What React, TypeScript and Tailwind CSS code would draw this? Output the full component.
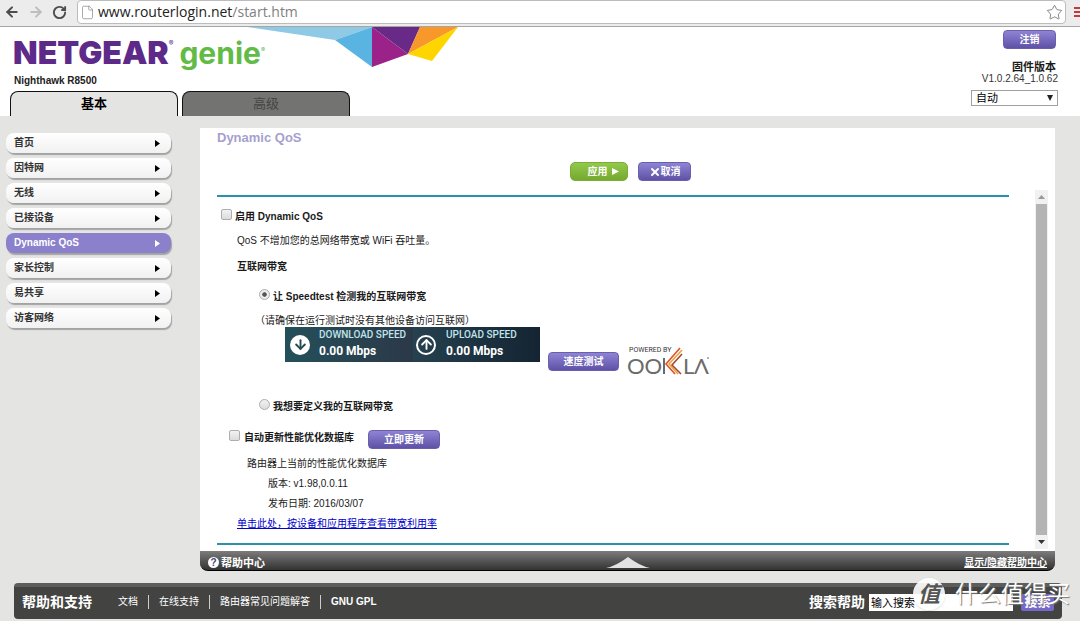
import type { ReactNode } from 'react'
import { ArrowLeft, ArrowRight, ArrowDown, ArrowUp, RotateCw, Star, File, X } from 'lucide-react'

const menuItems = ['首页', '因特网', '无线', '已接设备', 'Dynamic QoS', '家长控制', '易共享', '访客网络']
const helpLinks = ['文档', '在线支持', '路由器常见问题解答', 'GNU GPL']

function PurpleButton({ children, className = '' }: { children: ReactNode; className?: string }) {
  return (
    <button
      className={`flex h-[19px] items-center justify-center rounded border border-[#6a5fae] bg-linear-to-b from-[#8f84d4] to-[#5f52a6] font-bold text-white ${className}`}
    >
      {children}
    </button>
  )
}

function BrowserBar() {
  return (
    <div className="flex h-[27px] items-center border-b border-[#a5a5a5] bg-[#ececec] pb-[2px] text-[#4c4c4c]">
      <button aria-label="后退" className="ml-1"><ArrowLeft size={16} strokeWidth={3} /></button>
      <button aria-label="前进" className="ml-2 text-[#bdbdbd]"><ArrowRight size={16} strokeWidth={3} /></button>
      <button aria-label="刷新" className="ml-2"><RotateCw size={15} strokeWidth={3} /></button>
      <div className="ml-[10px] flex h-6 flex-1 items-center rounded-sm border border-[#bcbcbc] bg-white">
        <File size={15} strokeWidth={1} className="ml-[2px] text-[#777]" />
        <span className="ml-[3px] flex-1 font-['Open_Sans',sans-serif] text-[14px] leading-5 text-[#222]">
          www.routerlogin.net<span className="text-[#808080]">/start.htm</span>
        </span>
        <Star size={17} strokeWidth={1} className="mr-[2px] text-[#555]" />
      </div>
      <button aria-label="菜单" className="ml-2 flex w-[6px] flex-col gap-[2px]">
        <span className="h-[2px] bg-[#c43a3a]" />
        <span className="h-[2px] bg-[#c43a3a]" />
        <span className="h-[2px] bg-[#c43a3a]" />
      </button>
    </div>
  )
}

function Header() {
  return (
    <header className="relative flex justify-between bg-white pr-[22px] pl-[10px]">
      <svg width="212" height="40" viewBox="0 0 212 40" className="absolute top-0 left-[247px]" aria-hidden="true">
        <path d="M0 0H125L88 13Z" fill="#8ecae6" />
        <path d="M125 0V40L88 13Z" fill="#5ab4e2" />
        <path d="M125 0V40L161 27Z" fill="#9b2289" />
        <path d="M125 0H173L161 27Z" fill="#692a87" />
        <path d="M173 0H211L161 27Z" fill="#f8972a" />
        <path d="M211 0L185 34L161 27Z" fill="#ffd500" />
      </svg>
      <div>
        <div className="relative flex h-[46px] items-center pl-[3px] font-['Inter',sans-serif] leading-[46px]">
          <span className="mt-[6px] text-[32px] font-black text-[#5d2a8a]">NETGEAR</span>
          <span className="-mt-3 text-[7px] text-[#5d2a8a]">®</span>
          <span className="mt-[6px] ml-[6px] text-[30px] font-bold text-[#62bb46]">genie</span>
          <span className="text-[6px] text-[#62bb46]">®</span>
        </div>
        <div className="h-[18px] pl-1 leading-4 font-bold text-[#222]">Nighthawk R8500</div>
        <nav className="flex gap-1">
          <button className="h-[25px] w-[168px] rounded-t-lg border border-b-0 border-[#111] bg-[#e4e5e3] text-[13px] font-bold text-black">
            基本
          </button>
          <button className="h-[25px] w-[168px] rounded-t-lg border border-b-0 border-[#111] bg-[#737472] text-[13px] text-[#444]">
            高级
          </button>
        </nav>
      </div>
      <div className="flex flex-col items-end pt-[3px]">
        <PurpleButton className="mr-[2px] w-[53px]">注销</PurpleButton>
        <span className="mt-3 mr-[2px] text-[11px] leading-3 font-bold">固件版本</span>
        <span className="leading-3 text-[#333]">V1.0.2.64_1.0.62</span>
        <div className="relative mt-[5px]">
          <select aria-label="语言" className="block h-4 w-[87px] appearance-none rounded-none border border-[#a0a0a0] bg-white pl-1 text-[11px] leading-3 text-black">
            <option>自动</option>
          </select>
          <svg width="6" height="6" className="pointer-events-none absolute top-[5px] right-[5px]" aria-hidden="true">
            <path d="M0 0H6L3 6Z" fill="#222" />
          </svg>
        </div>
      </div>
    </header>
  )
}

function Sidebar() {
  return (
    <nav className="flex w-[165px] shrink-0 flex-col gap-[5px] pt-[5px]">
      {menuItems.map((item) => {
        const active = item === 'Dynamic QoS'
        return (
          <a
            key={item}
            href="#"
            className={`flex h-5 items-center justify-between rounded-lg pr-[11px] pl-2 leading-4 font-bold shadow-[1px_2px_1px_#a3a3a3] ${
              active ? 'bg-[#8b80cc] text-white' : 'bg-linear-to-b from-white to-[#f1f1f1] text-[#333]'
            }`}
          >
            {item}
            <svg width="5" height="7" aria-hidden="true">
              <path d="M0 0L5 3.5L0 7Z" fill={active ? '#fff' : '#000'} />
            </svg>
          </a>
        )
      })}
    </nav>
  )
}

const boxStyle =
  'size-[11px] shrink-0 appearance-none border border-[#adadad] bg-linear-to-b from-[#f2f2f2] to-[#dcdcdc]'

function SpeedBanner() {
  return (
    <div className="flex h-[35px] w-[255px] shrink-0 bg-linear-to-r from-[#1f4a52] via-[#26414f] to-[#142433] font-['Roboto',sans-serif] text-white">
      <div className="flex w-32 items-center bg-linear-to-r from-[#23505a] to-[#2b3848] pl-[5px]">
        <span className="flex size-5 items-center justify-center rounded-full bg-white text-[#1f4a52]">
          <ArrowDown size={15} strokeWidth={3} />
        </span>
        <div className="ml-[9px] pb-[3px] whitespace-nowrap">
          <div className="leading-4 font-medium text-[#bfe4ea]">DOWNLOAD SPEED</div>
          <div className="text-[12px] leading-4 font-bold">0.00 Mbps</div>
        </div>
      </div>
      <div className="flex items-center pl-[3px]">
        <span className="flex size-5 items-center justify-center rounded-full border-2 border-white">
          <ArrowUp size={15} strokeWidth={3} />
        </span>
        <div className="ml-[10px] pb-[3px] whitespace-nowrap">
          <div className="leading-4 font-medium text-[#bfe4ea]">UPLOAD SPEED</div>
          <div className="text-[12px] leading-4 font-bold">0.00 Mbps</div>
        </div>
      </div>
    </div>
  )
}

function OoklaLogo() {
  return (
    <svg width="90" height="36" viewBox="0 0 90 36" className="-mb-[6px] shrink-0" role="img" aria-label="Powered by Ookla">
      <text x="2" y="6" fontSize="7" fontFamily="Roboto" fill="#333">POWERED BY</text>
      <g fontSize="22" fontFamily="Lato" fill="#6b6b6b">
        <text x="0" y="28">OO</text>
        <text x="56" y="28">L</text>
        <text x="67" y="28">Λ</text>
      </g>
      <g fill="none" strokeWidth="1.6">
        <path d="M37 12V28" stroke="#6b6b6b" strokeWidth="2" />
        <path d="M53 2L39 18L48 28" stroke="#d9532c" />
        <path d="M55 4L42 18L51 28" stroke="#f0a13a" />
        <path d="M55 8L45 19L54 28" stroke="#a24a2f" />
      </g>
      <circle cx="81" cy="12" r="1" fill="#999" />
    </svg>
  )
}

function QosForm() {
  return (
    <form className="min-w-0 flex-1 border-y-2 border-[#2a93ab] pt-3 pb-[11px] leading-4">
      <label className="flex items-start gap-[3px] pl-1 font-bold">
        <input type="checkbox" className={`${boxStyle} rounded-xs`} />
        启用 Dynamic QoS
      </label>
      <p className="mt-2 pl-5">QoS 不增加您的总网络带宽或 WiFi 吞吐量。</p>
      <h2 className="mt-[10px] pl-5 font-bold">互联网带宽</h2>
      <label className="mt-[14px] flex items-start gap-[3px] pl-[42px] font-bold">
        <input
          type="radio"
          name="bandwidth"
          defaultChecked
          className={`${boxStyle} rounded-full checked:bg-[radial-gradient(circle,#555_30%,#eee_40%)]`}
        />
        让 Speedtest 检测我的互联网带宽
      </label>
      <p className="mt-[10px] pl-[38px] leading-3">（请确保在运行测试时没有其他设备访问互联网）</p>
      <div className="flex items-start gap-2 pl-[68px]">
        <SpeedBanner />
        <div className="flex items-end gap-2 pt-[19px]">
          <PurpleButton className="mb-[5px] w-[71px]">速度测试</PurpleButton>
          <OoklaLogo />
        </div>
      </div>
      <label className="mt-[23px] flex items-start gap-[3px] pl-[42px] font-bold">
        <input type="radio" name="bandwidth" className={`${boxStyle} rounded-full`} />
        我想要定义我的互联网带宽
      </label>
      <div className="mt-[15px] flex items-start gap-[14px] pl-3">
        <label className="flex items-start gap-1 font-bold">
          <input type="checkbox" className={`${boxStyle} rounded-xs`} />
          自动更新性能优化数据库
        </label>
        <PurpleButton className="w-[72px]">立即更新</PurpleButton>
      </div>
      <p className="mt-[7px] pl-[30px]">路由器上当前的性能优化数据库</p>
      <p className="mt-1 pl-[51px]">版本: v1.98,0.0.11</p>
      <p className="mt-1 pl-[51px]">发布日期: 2016/03/07</p>
      <a href="#" className="mt-1 ml-5 block w-fit text-[#0000cc] underline">单击此处，按设备和应用程序查看带宽利用率</a>
    </form>
  )
}

function Scrollbar() {
  return (
    <div className="flex w-[13px] shrink-0 flex-col items-center bg-[#f1f1f1] py-[5px]">
      <svg width="7" height="4" aria-hidden="true"><path d="M0 4L3.5 0L7 4Z" fill="#999" /></svg>
      <div className="my-[5px] w-[11px] flex-1 bg-[#b4b4b4]" />
      <svg width="7" height="4" aria-hidden="true"><path d="M0 0L3.5 4L7 0Z" fill="#333" /></svg>
    </div>
  )
}

function Panel() {
  return (
    <main className="min-w-0 flex-1">
      <div className="bg-white pr-[7px] pl-[17px]">
        <h1 className="pt-[2px] text-[13px] leading-4 font-bold text-[#a79fd0]">Dynamic QoS</h1>
        <div className="flex justify-center gap-[10px] pt-4 pr-1">
          <button className="flex h-[19px] w-[58px] items-center justify-center gap-1 rounded-[5px] border border-[#78ad38] bg-linear-to-b from-[#93c94a] to-[#75a92f] pl-2 font-bold text-white">
            应用
            <svg width="7" height="7" aria-hidden="true"><path d="M0 0L7 3.5L0 7Z" fill="#fff" /></svg>
          </button>
          <PurpleButton className="w-[53px]">
            <X size={12} strokeWidth={4} />
            取消
          </PurpleButton>
        </div>
        <div className="flex gap-[26px] pt-[9px] pb-[2px]">
          <div className="flex min-w-0 flex-1 pt-[5px] pb-1">
            <QosForm />
          </div>
          <Scrollbar />
        </div>
      </div>
      <div className="flex h-5 items-center rounded-b-lg border-b border-black bg-linear-to-b from-[#7d7d7d] to-[#333] px-2 pt-1 font-bold text-white">
        <div className="flex-1">
          <a href="#" className="flex w-fit items-center gap-[2px] text-[11px] leading-4">
            <span className="flex size-[11px] items-center justify-center rounded-full bg-white text-[10px] leading-none text-[#4b4574]">?</span>
            帮助中心
          </a>
        </div>
        <svg width="44" height="11" aria-hidden="true">
          <path d="M0 11Q10 9 22 0Q34 9 44 11Z" fill="#e2e2e2" />
        </svg>
        <div className="flex-1 text-right leading-4">
          <a href="#" className="underline">显示/隐藏帮助中心</a>
        </div>
      </div>
    </main>
  )
}

function Footer() {
  return (
    <footer className="relative mt-3 mr-[18px] ml-[14px] flex h-9 items-center rounded-sm border-t-4 border-[#5d5d5b] bg-[#434442] px-2 pb-[2px] text-white">
      <span className="text-[14px] leading-5 font-bold">帮助和支持</span>
      <ul className="ml-4 flex items-center">
        {helpLinks.map((link, i) => (
          <li
            key={link}
            className={`px-[10px] leading-[14px] ${i > 0 ? 'border-l border-[#ccc]' : ''} ${link === 'GNU GPL' ? 'font-bold' : ''}`}
          >
            <a href="#">{link}</a>
          </li>
        ))}
      </ul>
      <label htmlFor="help-search" className="ml-auto text-[14px] leading-5 font-bold">搜索帮助</label>
      <input
        id="help-search"
        defaultValue="输入搜索"
        className="ml-1 h-[17px] w-[144px] bg-white px-[2px] text-[11px] text-black"
      />
      <button className="ml-2 h-[17px] w-[33px] rounded-xs bg-[#7469c9] text-[13px] leading-4 font-bold">搜索</button>
      <div className="pointer-events-none absolute -top-[9px] -right-2 flex items-center gap-[10px] text-white">
        <span className="flex size-8 items-center justify-center rounded-full bg-white/90 text-[22px] font-bold text-[#555] italic shadow-sm">值</span>
        <span className="text-[23px] leading-8 [text-shadow:1px_1px_1px_#777]">什么值得买</span>
      </div>
    </footer>
  )
}

export default function App() {
  return (
    <div className="min-h-screen overflow-hidden bg-[#e4e4e3] font-['Liberation_Sans','Noto_Sans_CJK_SC',sans-serif] text-[10px] text-[#1a1a1a]">
      <BrowserBar />
      <Header />
      <div className="flex gap-[29px] pt-3 pr-[25px] pl-[6px]">
        <Sidebar />
        <Panel />
      </div>
      <Footer />
    </div>
  )
}
